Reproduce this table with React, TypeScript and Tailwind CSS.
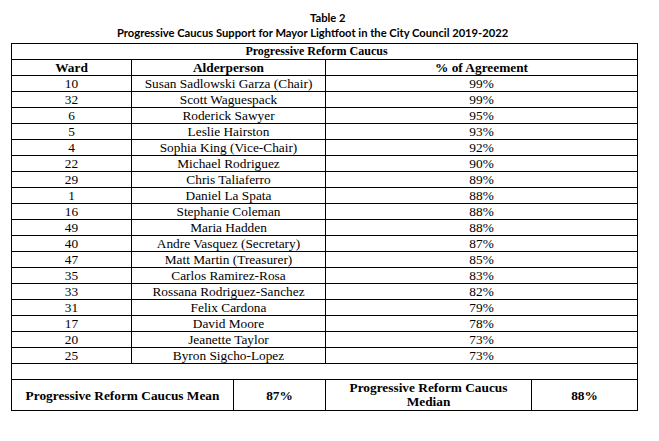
import React from "react";

const rows: [string, string, string][] = [
  ["10", "Susan Sadlowski Garza (Chair)", "99%"],
  ["32", "Scott Waguespack", "99%"],
  ["6", "Roderick Sawyer", "95%"],
  ["5", "Leslie Hairston", "93%"],
  ["4", "Sophia King (Vice-Chair)", "92%"],
  ["22", "Michael Rodriguez", "90%"],
  ["29", "Chris Taliaferro", "89%"],
  ["1", "Daniel La Spata", "88%"],
  ["16", "Stephanie Coleman", "88%"],
  ["49", "Maria Hadden", "88%"],
  ["40", "Andre Vasquez (Secretary)", "87%"],
  ["47", "Matt Martin (Treasurer)", "85%"],
  ["35", "Carlos Ramirez-Rosa", "83%"],
  ["33", "Rossana Rodriguez-Sanchez", "82%"],
  ["31", "Felix Cardona", "79%"],
  ["17", "David Moore", "78%"],
  ["20", "Jeanette Taylor", "73%"],
  ["25", "Byron Sigcho-Lopez", "73%"],
];

const cell = "border border-black p-0 text-center";

export default function App() {
  return (
    <div className="w-[659px] h-[441px] bg-white text-black overflow-hidden">
      <div className="pt-[10px] font-['Lato',sans-serif] font-bold text-[11.2px]">
        <div className="pl-[310px] leading-[15px]">Table 2</div>
        <div className="pl-[117px] leading-[15px]">
          Progressive Caucus Support for Mayor Lightfoot in the City Council 2019-2022
        </div>
      </div>
      <table className="ml-[11px] mt-[3px] w-[626px] table-fixed border-collapse border border-black font-['Liberation_Serif',serif] text-[13.33px] leading-[13px]">
        <colgroup>
          <col className="w-[120px]" />
          <col className="w-[102px]" />
          <col className="w-[92px]" />
          <col className="w-[206px]" />
          <col className="w-[106px]" />
        </colgroup>
        <tbody>
          <tr className="h-[16px]">
            <td colSpan={5} className={`${cell} font-bold text-[12px] pr-[16px]`}>
              Progressive Reform Caucus
            </td>
          </tr>
          <tr className="h-[16px]">
            <td className={`${cell} font-bold`}>Ward</td>
            <td colSpan={2} className={`${cell} font-bold`}>Alderperson</td>
            <td colSpan={2} className={`${cell} font-bold`}>% of Agreement</td>
          </tr>
          {rows.map(([w, n, p]) => (
            <tr key={w + n} className="h-[16px]">
              <td className={cell}>{w}</td>
              <td colSpan={2} className={cell}>{n}</td>
              <td colSpan={2} className={cell}>{p}</td>
            </tr>
          ))}
          <tr className="h-[16px]">
            <td colSpan={5} className="border border-black p-0"></td>
          </tr>
          <tr className="h-[31px] font-bold">
            <td colSpan={2} className={cell}>Progressive Reform Caucus Mean</td>
            <td className={cell}>87%</td>
            <td className={`${cell} leading-[14px]`}>
              <div>Progressive Reform Caucus</div>
              <div>Median</div>
            </td>
            <td className={cell}>88%</td>
          </tr>
        </tbody>
      </table>
    </div>
  );
}
